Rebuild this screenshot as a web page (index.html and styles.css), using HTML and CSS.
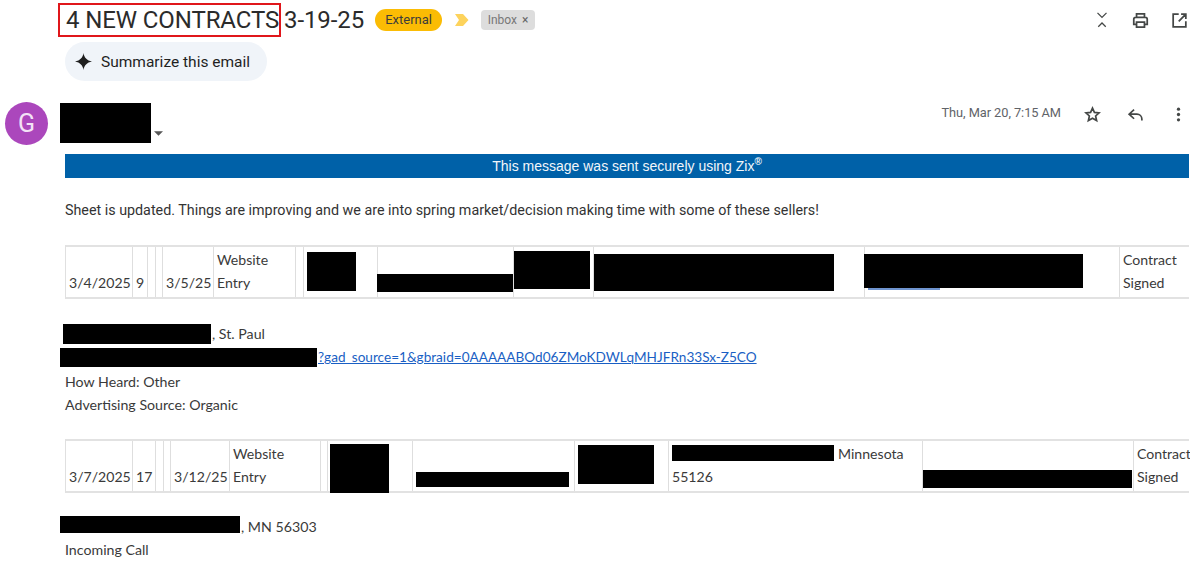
FILE: index.html
```html
<!DOCTYPE html>
<html lang="en">
<head>
<meta charset="utf-8">
<title>4 NEW CONTRACTS 3-19-25</title>
<link rel="stylesheet" href="styles.css">
</head>
<body>
<div class="page">
  <header class="subject-row">
    <h1 class="subject"><span class="boxed">4 NEW CONTRACTS</span> 3-19-25</h1>
    <span class="chip-external">External</span>
    <svg class="importance" viewBox="0 0 14 12"><path d="M0 0h8l5.500 6-5.500 6H0l4-6z"/></svg>
    <span class="chip-inbox">Inbox<span class="chip-x">×</span></span>
    <div class="top-actions">
      <svg class="icon collapse" viewBox="0 0 24 24"><path d="M6 2.500l6 6 6-6M7 21l5-5 5 5" fill="none" stroke="#444746" stroke-width="1.700"/></svg>
      <svg class="icon" viewBox="0 0 24 24"><path d="M7 8V3.500h10V8M7 17H3.500v-6.500A2.500 2.500 0 0 1 6 8h12a2.500 2.500 0 0 1 2.500 2.500V17H17M7 14h10v6.500H7z" fill="none" stroke="#444746" stroke-width="2.200"/></svg>
      <svg class="icon" viewBox="0 0 24 24"><path d="M11 4H4v16h16v-7M14 4h6v6M20 4l-9 9" fill="none" stroke="#444746" stroke-width="2.200"/></svg>
    </div>
  </header>

  <button class="summarize">
    <svg class="spark" viewBox="0 0 18 18"><path d="M9 0c.7 4.800 3.500 8 9 9-5.500 1-8.300 4.200-9 9-.7-4.800-3.500-8-9-9 5.500-1 8.300-4.200 9-9z"/></svg>
    Summarize this email
  </button>

  <section class="sender-row">
    <div class="avatar">G</div>
    <svg class="caret" viewBox="0 0 10 5"><path d="M0 0h10L5 5z"/></svg>
    <div class="meta">
      <span class="date">Thu, Mar 20, 7:15 AM</span>
      <svg class="icon-sm star" viewBox="0 0 24 24"><path d="M12 3l2.700 6 6.600.7-4.900 4.400 1.400 6.400L12 17.200l-5.800 3.300 1.400-6.400-4.900-4.400 6.600-.7z" fill="none" stroke="#444746" stroke-width="2.400"/></svg>
      <svg class="icon-sm reply" viewBox="0 0 24 24"><path d="M10 5l-7 6.500 7 6.500M3 11.500h11a7 7 0 0 1 7 7v2" fill="none" stroke="#444746" stroke-width="2.400"/></svg>
      <svg class="icon-sm more" viewBox="0 0 24 24"><circle cx="12" cy="4.500" r="2.300"/><circle cx="12" cy="12" r="2.300"/><circle cx="12" cy="19.500" r="2.300"/></svg>
    </div>
  </section>

  <main class="body">
    <div class="banner">This message was sent securely using Zix<sup class="reg">®</sup></div>
    <p class="intro">Sheet is updated. Things are improving and we are into spring market/decision making time with some of these sellers!</p>

    <div class="sheet sheet-a">
      <div class="cell">3/4/2025</div>
      <div class="cell">9</div>
      <div class="cell"></div>
      <div class="cell"></div>
      <div class="cell">3/5/25</div>
      <div class="cell">Website<br>Entry</div>
      <div class="cell"></div>
      <div class="cell"></div>
      <div class="cell"></div>
      <div class="cell"></div>
      <div class="cell"></div>
      <div class="cell"></div>
      <div class="cell">Contract<br>Signed</div>
    </div>

    <div class="notes notes-a">
      <div class="note note-indent">, St. Paul</div>
      <div class="note"><a class="link" href="#">?gad_source=1&amp;gbraid=0AAAAABOd06ZMoKDWLqMHJFRn33Sx-Z5CO</a></div>
      <div class="note">How Heard: Other</div>
      <div class="note">Advertising Source: Organic</div>
    </div>

    <div class="sheet sheet-b">
      <div class="cell">3/7/2025</div>
      <div class="cell">17</div>
      <div class="cell"></div>
      <div class="cell"></div>
      <div class="cell">3/12/25</div>
      <div class="cell">Website<br>Entry</div>
      <div class="cell"></div>
      <div class="cell"></div>
      <div class="cell"></div>
      <div class="cell"></div>
      <div class="cell"><span class="right-line">Minnesota</span><br>55126</div>
      <div class="cell"></div>
      <div class="cell">Contract<br>Signed</div>
    </div>

    <div class="notes notes-b">
      <div class="note note-indent-b">, MN 56303</div>
      <div class="note">Incoming Call</div>
    </div>
  </main>

  <span class="red-box"></span>
  <i class="link-peek"></i>
  <i class="redact r1"></i><i class="redact r2"></i><i class="redact r3"></i><i class="redact r4"></i>
  <i class="redact r5"></i><i class="redact r6"></i><i class="redact r7"></i><i class="redact r8"></i>
  <i class="redact r9"></i><i class="redact r10"></i><i class="redact r11"></i><i class="redact r12"></i>
  <i class="redact r13"></i><i class="redact r14"></i>
</div>
</body>
</html>
```

FILE: styles.css
```css
* { box-sizing: border-box; }
html, body { margin: 0; padding: 0; background: #fff; }
.page {
  position: relative;
  width: 1200px;
  height: 582px;
  overflow: hidden;
  font-family: Roboto, "Liberation Sans", sans-serif;
  color: #1f1f1f;
}

/* Subject */
.subject-row {
  display: flex;
  align-items: center;
  height: 40px;
  padding-left: 66px;
}
.subject {
  margin: 0;
  font-size: 24px;
  font-weight: 400;
  white-space: nowrap;
  color: #2b2b2b;
  letter-spacing: -0.1px;
}
.boxed { margin-right: -1px; }
.chip-external {
  margin-left: 11px;
  width: 67px;
  height: 22px;
  line-height: 22px;
  text-align: center;
  background: #fbbc04;
  border-radius: 11px;
  font-size: 13px;
  color: #3c3c3c;
}
.importance { margin-left: 13px; width: 14px; height: 12px; fill: #fdd35c; }
.chip-inbox {
  margin-left: 12px;
  width: 54px;
  height: 20px;
  line-height: 20px;
  text-align: center;
  background: #dddddd;
  border-radius: 4px;
  font-size: 12px;
  color: #777;
}
.chip-x { color: #666; margin-left: 5px; }
.top-actions {
  display: flex;
  align-items: center;
  gap: 20px;
  margin-left: auto;
  padding-right: 11px;
}
.icon { width: 19px; height: 19px; display: block; }
.collapse { width: 18px; height: 18px; }
.icon-sm { width: 17px; height: 17px; display: block; }

/* Summarize */
.summarize {
  display: flex;
  align-items: center;
  gap: 9px;
  margin: 2px 0 0 65px;
  width: 202px;
  height: 39px;
  padding: 0 0 0 10px;
  border: 0;
  border-radius: 20px;
  background: #f0f4f9;
  font: 15.500px Roboto, sans-serif;
  color: #1f1f1f;
}
.spark { width: 17px; height: 17px; fill: #1f1f1f; }

/* Sender */
.sender-row {
  display: flex;
  align-items: flex-start;
  height: 52px;
  margin-top: 21px;
  padding-left: 5px;
}
.avatar {
  width: 43px;
  height: 43px;
  line-height: 43px;
  border-radius: 50%;
  background: #ab47bc;
  color: #f3e3f6;
  text-align: center;
  font-size: 25px;
}
.caret { width: 9px; height: 5px; margin: 29px 0 0 106px; fill: #555; }
.meta {
  display: flex;
  align-items: center;
  margin-left: auto;
  padding-right: 13px;
  height: 24px;
}
.date { font-size: 12.800px; color: #5f6368; margin-right: 23px; letter-spacing: -0.05px; position: relative; top: -2px; }
.star { margin-right: 26px; }
.reply { margin-right: 26px; }
.more { fill: #444746; }

/* Body */
.body {
  margin-left: 65px;
  width: 1124px;
  font-family: Lato, "Liberation Sans", sans-serif;
  font-size: 14.100px;
  color: #3a3a3a;
}
.banner {
  height: 24px;
  line-height: 24px;
  background: #0061a8;
  color: #f2f6fa;
  text-align: center;
  font-family: "Liberation Sans", Arial, sans-serif;
  font-size: 14px;
}
.reg { font-size: 10px; line-height: 0; font-weight: 700; }
.intro {
  margin: 22px 0 0;
  line-height: 20px;
  font-family: Roboto, sans-serif;
  font-size: 14.300px;
  color: #333;
}
.sheet {
  display: grid;
  height: 54px;
  margin-top: 25px;
  border-top: 2px solid #e2e2e2;
  border-bottom: 2px solid #e2e2e2;
  border-left: 1px solid #e0e0e0;
}
.sheet-a { grid-template-columns: 67px 15px 8px 7px 51px 82px 8px 74px 136px 80px 271px 255px 70px; }
.sheet-b {
  margin-top: 23px;
  grid-template-columns: 67px 23px 8px 7px 59px 91px 7px 85px 162px 94px 254px 211px 56px;
}
.cell {
  padding: 24px 3px 0;
  border-right: 1px solid #dedede;
  line-height: 23px;
  white-space: nowrap;
  overflow: hidden;
}
.cell:has(br) { padding-top: 1px; }
.cell:last-child { border-right: 0; }
.right-line { margin-left: 166px; }

.notes { line-height: 23.300px; font-size: 14.200px; }
.notes-a { margin-top: 23px; }
.notes-b { margin-top: 22px; }
.note-indent { padding-left: 147px; }
.note-indent-b { padding-left: 176px; }
.link { margin-left: 253px; color: #1a5fc4; font-size: 13.600px; }

/* Overlays */
.red-box {
  position: absolute;
  left: 58px;
  top: 3px;
  width: 223px;
  height: 34px;
  border: 2px solid #e0161b;
}
.link-peek { position: absolute; left: 868px; top: 288px; width: 72px; height: 2px; background: #6f94cf; }
.redact { position: absolute; background: #000; display: block; }
.r1 { left: 60px; top: 103px; width: 91px; height: 40px; }
.r2 { left: 307px; top: 252px; width: 49px; height: 39px; }
.r3 { left: 377px; top: 274px; width: 136px; height: 18px; }
.r4 { left: 514px; top: 251px; width: 76px; height: 38px; }
.r5 { left: 594px; top: 254px; width: 240px; height: 37px; }
.r6 { left: 864px; top: 254px; width: 219px; height: 34px; }
.r7 { left: 63px; top: 324px; width: 148px; height: 20px; }
.r8 { left: 60px; top: 348px; width: 257px; height: 19px; }
.r9 { left: 330px; top: 444px; width: 59px; height: 49px; }
.r10 { left: 416px; top: 472px; width: 153px; height: 15px; }
.r11 { left: 578px; top: 445px; width: 76px; height: 39px; }
.r12 { left: 672px; top: 445px; width: 162px; height: 16px; }
.r13 { left: 923px; top: 470px; width: 209px; height: 18px; }
.r14 { left: 60px; top: 516px; width: 180px; height: 17px; }
```
